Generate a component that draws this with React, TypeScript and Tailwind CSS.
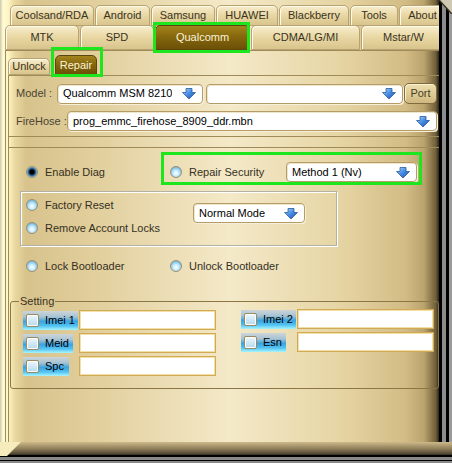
import React from "react";

const line = "border-[#a08a58]";

const Arrow = () => (
  <svg width="14" height="13" viewBox="0 0 14 13" className="shrink-0">
    <defs>
      <linearGradient id="arw" x1="0" y1="0" x2="1" y2="1">
        <stop offset="0" stopColor="#b8e0ff" />
        <stop offset="0.45" stopColor="#4a90e6" />
        <stop offset="1" stopColor="#1a4ea8" />
      </linearGradient>
    </defs>
    <path d="M4 1.5h6v4h3.5L7 12 0.5 5.5H4z" fill="url(#arw)" stroke="#2b5a9c" strokeWidth="0.8" strokeLinejoin="round" />
  </svg>
);

const Combo = ({ text, className }: { text: string; className: string }) => (
  <div
    className={`flex items-center justify-between h-[20px] rounded-[4px] border border-[#b59c66] bg-white pl-[5px] pr-[6px] shadow-[inset_1px_1px_0_#efe6cc,1px_1px_0_#f6efd9] text-black ${className}`}
  >
    <span className="whitespace-nowrap overflow-hidden">{text}</span>
    <Arrow />
  </div>
);

const Radio = ({ checked }: { checked?: boolean }) => (
  <span
    className={`flex items-center justify-center w-[12px] h-[12px] rounded-full border border-[#9d9070] ${
      checked
        ? "bg-[radial-gradient(circle,#000000_0%,#000000_28%,#1f3a5c_42%,#6cb6e2_70%,#d8f2ff_100%)]"
        : "bg-[radial-gradient(circle_at_50%_62%,#ffffff_0%,#c9ecff_35%,#78bfe6_72%,#3f7fb4_100%)]"
    }`}
  />
);

const RadioLabel = ({ label, checked, className = "" }: { label: string; checked?: boolean; className?: string }) => (
  <div className={`flex items-center gap-[7px] h-[20px] ${className}`}>
    <Radio checked={checked} />
    <span className="text-[#35301f] whitespace-nowrap">{label}</span>
  </div>
);

const Tab = ({ label, w, selected }: { label: string; w: string; selected?: boolean }) => (
  <div
    className={`${w} shrink-0 h-full flex items-center justify-center rounded-t-[5px] border whitespace-nowrap ${
      selected
        ? "border-[#5c4610] bg-[linear-gradient(to_bottom,#a4841e_0%,#86680e_45%,#6c5006_100%)] text-[#fbf3d6]"
        : "border-[#b9a271] bg-[linear-gradient(to_bottom,#f7eecf_0%,#ead9a6_45%,#d8c48c_100%)] text-[#3a331f] shadow-[inset_1px_1px_0_#fffbe8]"
    }`}
  >
    {label}
  </div>
);

const Badge = ({ label, w }: { label: string; w: string }) => (
  <div
    className={`${w} flex items-center h-[19px] shrink-0 bg-[linear-gradient(to_bottom,#cdd5d8_0%,#a8c4d4_30%,#3aa3e0_55%,#50c2f2_78%,#a8f5ff_100%)]`}
  >
    <span className="ml-[3px] w-[13px] h-[13px] rounded-[2px] border border-[#9a8a62] bg-[linear-gradient(to_bottom,#eef7fb,#b4daee)] shadow-[inset_0_0_0_1px_#ffffff]" />
    <span className="ml-[6px] text-black whitespace-nowrap">{label}</span>
  </div>
);

const Field = () => (
  <div className="w-[137px] h-[20px] bg-white border border-[#d0aa55] shadow-[inset_0_0_0_1px_#f2e0a8]" />
);

const row1: [string, string][] = [
  ["Coolsand/RDA", "w-[84px]"],
  ["Android", "w-[55px]"],
  ["Samsung", "w-[64px]"],
  ["HUAWEI", "w-[62px]"],
  ["Blackberry", "w-[70px]"],
  ["Tools", "w-[48px]"],
  ["About", "w-[47px]"],
];

export default function App() {
  return (
    <div className="w-[452px] h-[463px] flex flex-col overflow-hidden font-['Liberation_Sans',Arial,sans-serif] text-[11px] bg-[linear-gradient(to_right,#cfc8a8_0px,#fffbd6_3px,#fff5c4_8px,#e9d8a0_15px,#d8c38d_26px,#dfcc98_80px,#f4e9c8_230px,#e6d5a4_340px,#d3bc85_405px,#baa36c_424px,#6e5d38_436px,#2a2418_439px)]">
      <div className="flex flex-1 min-h-0">
        <div className="w-[439px] shrink-0 flex flex-col overflow-hidden">
          {/* top tab rows */}
          <div className="flex gap-[1px] pl-[10px] mt-[5px] h-[21px]">
            {row1.map(([l, w]) => (
              <Tab key={l} label={l} w={w} />
            ))}
          </div>
          <div className="flex gap-[1px] pl-[5px] h-[25px] -mt-[1px]">
            <Tab label="MTK" w="w-[74px]" />
            <Tab label="SPD" w="w-[74px]" />
            <div className="relative w-[95px] shrink-0 h-full flex">
              <Tab label="Qualcomm" w="w-[95px]" selected />
              <div className="absolute -left-[2px] -right-[0px] -top-[3px] -bottom-[3px] border-[3px] border-[#1ee61e]" />
            </div>
            <Tab label="CDMA/LG/MI" w="w-[109px]" />
            <Tab label="Mstar/W" w="w-[85px]" />
          </div>

          {/* tab page */}
          <div className={`flex-1 ml-[5px] border-t border-l ${line} flex flex-col`}>
            <div className="flex items-end gap-[5px] pl-[2px] h-[24px]">
              <div className="h-[17px] flex">
                <Tab label="Unlock" w="w-[42px]" />
              </div>
              <div className="relative h-[20px] flex">
                <Tab label="Repair" w="w-[42px]" selected />
                <div className="absolute -left-[4px] -right-[6px] -top-[8px] -bottom-[2px] border-[3px] border-[#1ee61e]" />
              </div>
            </div>

            <div className={`flex-1 ml-[2px] border-t border-l ${line} flex flex-col text-[#3a3322]`}>
              {/* model group */}
              <div className={`pt-[7px] pb-[5px] pl-[7px] border-b ${line} flex flex-col gap-[7px]`}>
                <div className="flex items-center h-[21px]">
                  <span className="w-[41px] text-[#4a4332]">Model :</span>
                  <Combo text="Qualcomm MSM 8210" className="w-[146px]" />
                  <Combo text="" className="w-[197px] ml-[3px]" />
                  <div className="ml-[1px] w-[33px] h-[21px] flex items-center justify-center rounded-[5px] border border-[#7f6b3e] bg-[linear-gradient(to_bottom,#eee0b0,#cfb87f)] shadow-[inset_1px_1px_0_#fbf2d2] text-[#4a3e22]">
                    Port
                  </div>
                </div>
                <div className="flex items-center h-[20px]">
                  <span className="w-[51px] text-[#4a4332]">FireHose :</span>
                  <Combo text="prog_emmc_firehose_8909_ddr.mbn" className="w-[370px]" />
                </div>
              </div>

              {/* diag group */}
              <div className={`mt-[10px] border-t ${line} pt-[14px] flex flex-col`}>
                <div className="flex items-center h-[20px] pl-[17px]">
                  <RadioLabel label="Enable Diag" checked className="w-[144px]" />
                  <div className="relative flex items-center">
                    <RadioLabel label="Repair Security" className="w-[116px]" />
                    <Combo text="Method 1 (Nv)" className="w-[131px]" />
                    <div className="absolute -left-[9px] -right-[5px] -top-[10px] -bottom-[3px] border-[3px] border-[#1ee61e]" />
                  </div>
                </div>
                <div className="mt-[9px] ml-[11px] w-[317px] h-[55px] border border-[#b4b0a4] shadow-[inset_1px_1px_0_#ffffff,1px_1px_0_#ffffff] flex">
                  <div className="w-[172px] pl-[5px] pt-[3px] flex flex-col gap-[3px]">
                    <RadioLabel label="Factory Reset" />
                    <RadioLabel label="Remove Account Locks" />
                  </div>
                  <Combo text="Normal Mode" className="w-[112px] h-[19px] mt-[11px]" />
                </div>
                <div className="mt-[10px] flex items-center h-[20px] pl-[17px]">
                  <RadioLabel label="Lock Bootloader" className="w-[144px]" />
                  <RadioLabel label="Unlock Bootloader" />
                </div>
              </div>

              {/* setting */}
              <fieldset className="mt-[19px] ml-[1px] border border-[#8c7645] rounded-[3px] pb-[12px]">
                <legend className="ml-[8px] px-[1px] text-[#3a3322] leading-[13px]">Setting</legend>
                <div className="flex gap-[25px] pl-[12px] pt-[2px]">
                  <div className="w-[193px] flex flex-col gap-[3px]">
                    <div className="flex items-center justify-between h-[20px]">
                      <Badge label="Imei 1" w="w-[55px]" />
                      <Field />
                    </div>
                    <div className="flex items-center justify-between h-[20px]">
                      <Badge label="Meid" w="w-[50px]" />
                      <Field />
                    </div>
                    <div className="flex items-center justify-between h-[20px]">
                      <Badge label="Spc" w="w-[46px]" />
                      <Field />
                    </div>
                  </div>
                  <div className="w-[193px] flex flex-col gap-[3px] -mt-[1px]">
                    <div className="flex items-center justify-between h-[20px]">
                      <Badge label="Imei 2" w="w-[55px]" />
                      <Field />
                    </div>
                    <div className="flex items-center justify-between h-[20px]">
                      <Badge label="Esn" w="w-[45px]" />
                      <Field />
                    </div>
                  </div>
                </div>
              </fieldset>
            </div>
          </div>
        </div>

        {/* right frame */}
        <div className="w-[13px] shrink-0 flex flex-col bg-[linear-gradient(to_right,#000000_0px,#000000_3px,#8c8c8c_3px,#8c8c8c_7px,#000000_7px,#000000_10px,#9a9a9a_10px)]">
          <svg width="13" height="14" viewBox="0 0 13 14">
            <polygon points="0,0 13,0 13,14" fill="#cfc9b4" />
            <polyline points="0,0 13,14" stroke="#3a3222" strokeWidth="1.5" fill="none" />
          </svg>
        </div>
      </div>

      {/* bottom frame */}
      <div className="h-[21px] shrink-0 bg-[linear-gradient(to_bottom,#cdb98a_0px,#8d7c58_7px,#4f4532_12px,#2a2419_13px,#000000_13px,#000000_15px,#8a8a8a_15px,#8a8a8a_18px,#000000_18px,#000000_19px,#8a8a8a_19px)]">
        <svg width="22" height="21" viewBox="0 0 22 21">
          <polygon points="0,0 21,0 7,14 0,14" fill="#f5ebbb" />
        </svg>
      </div>
    </div>
  );
}
